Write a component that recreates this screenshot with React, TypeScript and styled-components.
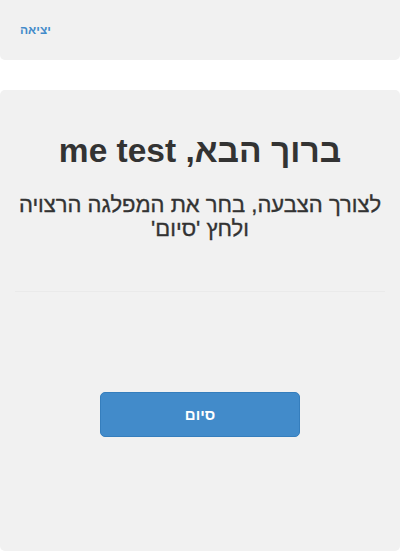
import styled, { createGlobalStyle } from 'styled-components';

const Global = createGlobalStyle`
  html, body { margin: 0; padding: 0; background: #fff; }
  body {
    font-family: "Liberation Sans", Arial, sans-serif;
    color: #333;
  }
`;

const Page = styled.div`
  display: flex;
  flex-direction: column;
  gap: 30px;
  width: 400px;
  height: 551px;
`;

const TopBar = styled.header`
  display: flex;
  align-items: center;
  height: 60px;
  padding: 0 20px;
  box-sizing: border-box;
  background: #f1f1f1;
  border-radius: 0 0 5px 5px;
`;

const LogoutLink = styled.a`
  font-size: 12px;
  font-weight: bold;
  color: #428bca;
  text-decoration: none;
  direction: rtl;
  cursor: pointer;
`;

const Panel = styled.main`
  flex: 1;
  display: flex;
  flex-direction: column;
  align-items: center;
  padding: 39px 15px 0;
  box-sizing: border-box;
  background: #f1f1f1;
  border-radius: 5px;
  direction: rtl;
  text-align: center;
`;

const Title = styled.h1`
  margin: 0;
  font-size: 33.5px;
  font-weight: bold;
  line-height: 44px;
  color: #333;
`;

const Subtitle = styled.h3`
  margin: 20px 0 0;
  font-size: 22px;
  font-weight: normal;
  line-height: 24px;
  color: #333;
  -webkit-text-stroke: 0.35px #333;
`;

const Divider = styled.hr`
  align-self: stretch;
  margin: 50px 0 0;
  border: 0;
  border-top: 1px solid #eaeaea;
`;

const FinishButton = styled.button`
  margin-top: 100px;
  width: 200px;
  height: 45px;
  border: 1px solid #357ebd;
  border-radius: 5px;
  background: #428bca;
  color: #fff;
  font-family: "Liberation Sans", Arial, sans-serif;
  font-size: 15px;
  font-weight: bold;
  cursor: pointer;
`;

export default function App() {
  return (
    <>
      <Global />
      <Page>
        <TopBar>
          <LogoutLink>יציאה</LogoutLink>
        </TopBar>
        <Panel>
          <Title>ברוך הבא, me test</Title>
          <Subtitle>לצורך הצבעה, בחר את המפלגה הרצויה ולחץ 'סיום'</Subtitle>
          <Divider />
          <FinishButton type="button">סיום</FinishButton>
        </Panel>
      </Page>
    </>
  );
}
